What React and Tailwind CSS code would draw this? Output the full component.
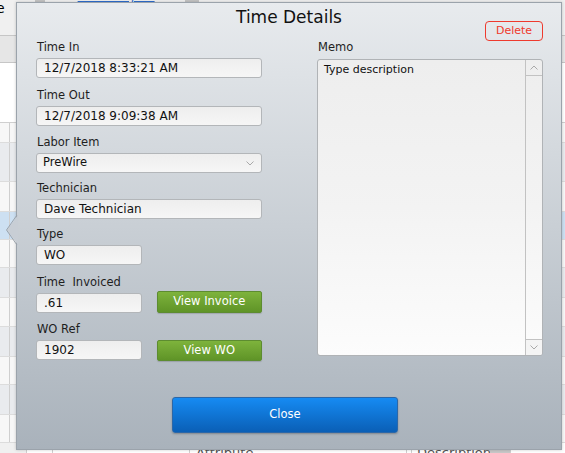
import React from "react";

const Label = ({ children, className = "" }) => (
  <div className={`h-[14px] leading-[14px] text-[11.5px] text-[#1e1e1e] pl-[1px] whitespace-pre ${className}`}>{children}</div>
);

const Box = ({ children, className = "" }) => (
  <div className={`h-[20px] box-border border border-[#b3b6b9] rounded-[3px] bg-gradient-to-b from-[#eeeeee] to-[#f6f6f6] pl-[7px] text-[12px] leading-[18px] text-[#111] ${className}`}>{children}</div>
);

const GreenBtn = ({ children, className = "" }) => (
  <div className={`w-[106px] box-border border border-[#5d8c30] rounded-[2px] bg-gradient-to-b from-[#7eb33c] to-[#5f9427] text-white text-[11.5px] flex items-center justify-center shadow-[0_1px_1px_rgba(0,0,0,0.15)] ${className}`}>{children}</div>
);

const Chevron = ({ up }) => (
  <svg width="8" height="5" viewBox="0 0 8 5">
    <polyline points={up ? "0.5,4.5 4,1 7.5,4.5" : "0.5,0.5 4,4 7.5,0.5"} fill="none" stroke="#a9a9a9" strokeWidth="1" />
  </svg>
);

const rows = [
  "h-[20px] bg-[#f7f7f7]",
  "h-[39px] bg-[#e9ebee]",
  "h-[30px] bg-[#f7f7f7]",
  "h-[28px] bg-[#cde0f2]",
  "h-[28px] bg-[#f7f7f7]",
  "h-[30px] bg-[#e9ebee]",
  "h-[29px] bg-[#f7f7f7]",
  "h-[30px] bg-[#e9ebee]",
  "h-[28px] bg-[#f7f7f7]",
  "h-[30px] bg-[#e9ebee]",
  "h-[28px] bg-[#f7f7f7]",
];

export default function App() {
  return (
    <div className="relative w-[565px] h-[453px] overflow-hidden bg-white font-['DejaVu_Sans',sans-serif]">
      {/* background page */}
      <div className="flex flex-col">
        <div className="h-[35px] bg-[#f0f0f0] flex items-start">
          <span className="text-[14px] leading-[14px] text-black -ml-[4px] mt-[1px]">e</span>
          <div className="ml-[30px] w-[10px] h-[2px] bg-[#c4c4c4]" />
          <div className="ml-[33px] text-[13px] leading-[13px] -mt-[11px] text-[#2f6fd0] underline">New Project</div>
          <div className="ml-[30px] w-[14px] h-[2px] bg-[#c4c4c4]" />
        </div>
        <div className="h-[28px] bg-[#e6e6e6] border-y border-[#c6c6c6]" />
        <div className="h-[60px] bg-white border-b border-[#cfcfcf]" />
        {rows.map((r, i) => (
          <div key={i} className={`flex ${r} border-b border-[#dcdcdc]`}>
            <div className="w-[10px] border-r border-[#cfcfcf]" />
            <div className="flex-1" />
          </div>
        ))}
        <div className="h-[20px] bg-white flex">
          <div className="w-[27px] bg-[#f0f0f0] border-r border-[#cfcfcf]" />
          <div className="w-[26px] border-r border-[#cfcfcf]" />
          <div className="w-[137px] border-r border-[#cfcfcf]" />
          <div className="w-[217px] pl-[6px] pt-[2px] text-[13px] leading-[16px] text-[#555] border-r border-[#cfcfcf]">Attribute</div>
          <div className="w-[5px] border-r border-[#cfcfcf]" />
          <div className="w-[78px] pl-[5px] pt-[2px] text-[13px] leading-[16px] text-[#555] border-r border-[#cfcfcf]">Description</div>
          <div className="w-[20px] bg-[#c8c8c8]" />
          <div className="flex-1 border-l border-[#cfcfcf]" />
        </div>
      </div>

      {/* dialog */}
      <div className="absolute left-[16px] top-[2px] w-[546px] h-[448px] box-border border border-[#9ba3ab] bg-gradient-to-b from-[#e8ebee] via-[#c9cfd5] to-[#a9b2bb] shadow-[0_0_3px_rgba(0,0,0,0.2)]">
        <svg className="absolute left-[-11px] top-[212px]" width="12" height="30" viewBox="0 0 12 30">
          <polygon points="12,0 1,15 12,30" fill="#c8ced5" />
          <polyline points="11,0 0.5,15 11,30" fill="none" stroke="#9ba3ab" strokeWidth="1" />
        </svg>

        <div className="mt-[4px] h-[20px] leading-[20px] text-center text-[17px] text-[#111]">Time Details</div>

        <div className="flex pl-[19px] pr-[18px] gap-[55px]">
          {/* left column */}
          <div className="w-[226px] flex flex-col">
            <Label className="mt-[13px]">Time In</Label>
            <Box className="mt-[4px]">12/7/2018 8:33:21 AM</Box>

            <Label className="mt-[10px]">Time Out</Label>
            <Box className="mt-[4px]">12/7/2018 9:09:38 AM</Box>

            <Label className="mt-[9px]">Labor Item</Label>
            <div className="mt-[4px] h-[20px] box-border border border-[#b3b6b9] rounded-[3px] bg-gradient-to-b from-[#eeeeee] to-[#f6f6f6] pl-[6px] pr-[7px] flex items-center justify-between text-[11.5px] text-[#111]">
              <span>PreWire</span>
              <Chevron />
            </div>

            <Label className="mt-[8px]">Technician</Label>
            <Box className="mt-[4px]">Dave Technician</Box>

            <Label className="mt-[8px]">Type</Label>
            <Box className="mt-[4px] w-[106px]">WO</Box>

            <Label className="mt-[10px]">{"Time  Invoiced"}</Label>
            <div className="mt-[2px] flex items-end gap-[15px]">
              <Box className="w-[106px]">.61</Box>
              <GreenBtn className="h-[22px] mb-[0px]">View Invoice</GreenBtn>
            </div>

            <Label className="mt-[9px]">WO Ref</Label>
            <div className="mt-[4px] flex items-start gap-[15px]">
              <Box className="w-[106px]">1902</Box>
              <GreenBtn className="h-[21px]">View WO</GreenBtn>
            </div>
          </div>

          {/* right column */}
          <div className="w-[226px] flex flex-col">
            <div className="self-end -mt-[6px] w-[58px] h-[20px] box-border border border-[#ee3a2e] rounded-[4px] text-[#f0392b] text-[11px] leading-[18px] text-center">Delete</div>
            <Label className="-mt-[1px]">Memo</Label>
            <div className="mt-[5px] h-[297px] box-border border border-[#b0b3b6] rounded-[3px] flex bg-gradient-to-b from-[#eeeeee] via-[#f3f3f3] to-[#fcfcfc] overflow-hidden">
              <div className="flex-1 pl-[6px] pt-[3px] text-[11px] leading-[14px] text-[#111]">Type description</div>
              <div className="w-[17px] border-l border-[#c2c2c2] flex flex-col justify-between">
                <div className="h-[16px] border-b border-[#c2c2c2] flex items-center justify-center"><Chevron up /></div>
                <div className="h-[16px] border-t border-[#c2c2c2] flex items-center justify-center bg-[#f4f4f4]"><Chevron /></div>
              </div>
            </div>
          </div>
        </div>

        <div className="ml-[155px] mt-[36px] w-[226px] h-[36px] box-border border border-[#2b67a8] rounded-[3px] bg-gradient-to-b from-[#168bf3] to-[#0a5fb6] text-white text-[11.5px] flex items-center justify-center shadow-[0_1px_2px_rgba(0,0,0,0.25)]">Close</div>
      </div>
    </div>
  );
}
